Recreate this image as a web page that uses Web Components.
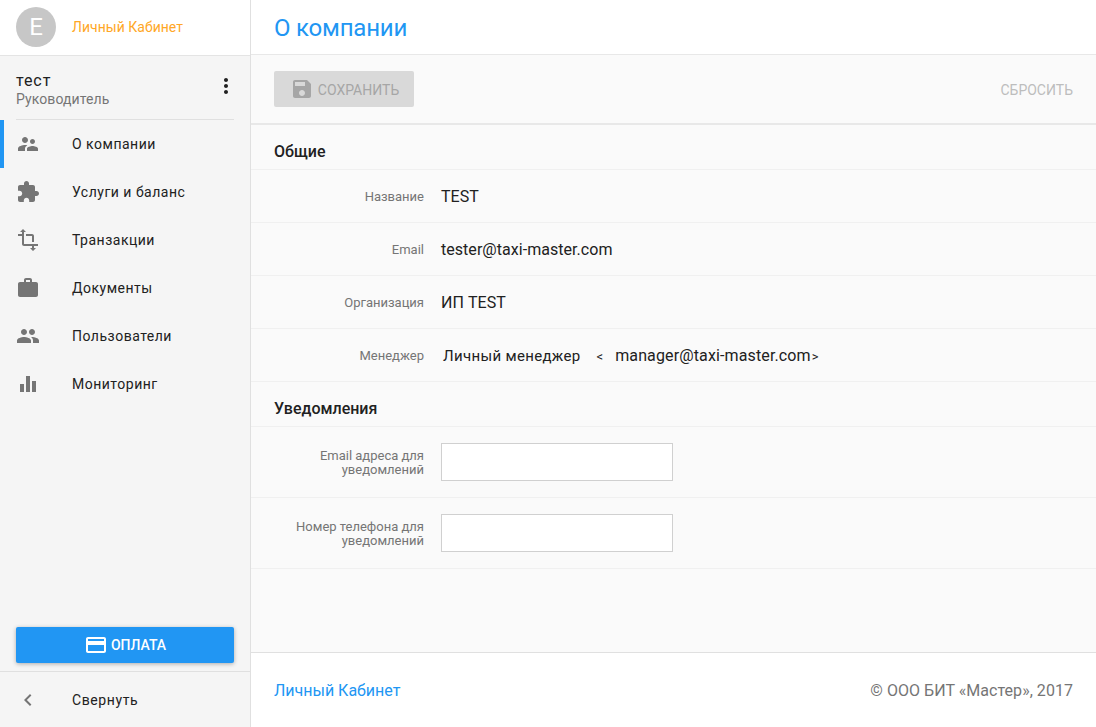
<!DOCTYPE html>
<html lang="ru">
<head>
<meta charset="utf-8">
<title>О компании</title>
<style>
  html, body { margin: 0; height: 100%; }
  body { font-family: Roboto, "Liberation Sans", sans-serif; overflow: hidden; }
</style>
</head>
<body>
<app-shell>
  <app-sidebar slot="sidebar">
    <nav-item active label="О компании" icon="M16.5 12c1.38 0 2.49-1.12 2.49-2.5S17.88 7 16.5 7C15.12 7 14 8.12 14 9.5s1.12 2.5 2.5 2.5zM9 11c1.66 0 2.99-1.34 2.99-3S10.66 5 9 5C7.34 5 6 6.34 6 8s1.34 3 3 3zm7.5 3c-1.83 0-5.5.92-5.5 2.75V19h11v-2.25c0-1.83-3.67-2.75-5.5-2.75zM9 13c-2.33 0-7 1.17-7 3.5V19h7v-2.25c0-.85.33-2.34 2.37-3.47C10.5 13.1 9.66 13 9 13z"></nav-item>
    <nav-item label="Услуги и баланс" icon="M20.5 11H19V7c0-1.1-.9-2-2-2h-4V3.5C13 2.12 11.88 1 10.5 1S8 2.12 8 3.5V5H4c-1.1 0-1.99.9-1.99 2v3.8H3.5c1.49 0 2.7 1.21 2.7 2.7s-1.21 2.7-2.7 2.7H2V20c0 1.1.9 2 2 2h3.8v-1.5c0-1.49 1.21-2.7 2.7-2.7 1.49 0 2.7 1.21 2.7 2.7V22H17c1.1 0 2-.9 2-2v-4h1.5c1.38 0 2.5-1.12 2.5-2.5S21.88 11 20.5 11z"></nav-item>
    <nav-item label="Транзакции" icon="M22 18v-2H8V4h2L7 1 4 4h2v2H2v2h4v8c0 1.1.9 2 2 2h8v2h-2l3 3 3-3h-2v-2h4zM10 8h6v6h2V8c0-1.1-.9-2-2-2h-6v2z"></nav-item>
    <nav-item label="Документы" icon="M20 6h-4V4c0-1.11-.89-2-2-2h-4c-1.11 0-2 .89-2 2v2H4c-1.11 0-1.99.89-1.99 2L2 19c0 1.11.89 2 2 2h16c1.11 0 2-.89 2-2V8c0-1.11-.89-2-2-2zm-6 0h-4V4h4v2z"></nav-item>
    <nav-item label="Пользователи" icon="M16 11c1.66 0 2.99-1.34 2.99-3S17.66 5 16 5c-1.66 0-3 1.34-3 3s1.34 3 3 3zm-8 0c1.66 0 2.99-1.34 2.99-3S9.66 5 8 5C6.34 5 5 6.34 5 8s1.34 3 3 3zm0 2c-2.33 0-7 1.17-7 3.5V19h14v-2.5c0-2.33-4.67-3.5-7-3.5zm8 0c-.29 0-.62.02-.97.05 1.16.84 1.97 1.97 1.97 3.45V19h6v-2.5c0-2.33-4.67-3.5-7-3.5z"></nav-item>
    <nav-item label="Мониторинг" icon="M10 20h4V4h-4v16zm-6 0h4v-8H4v8zM16 9v11h4V9h-4z"></nav-item>
  </app-sidebar>
  <company-page slot="main">
    <section-head>Общие</section-head>
    <form-row label="Название">TEST</form-row>
    <form-row label="Email">tester@taxi-master.com</form-row>
    <form-row label="Организация">ИП TEST</form-row>
    <manager-row label="Менеджер"></manager-row>
    <section-head>Уведомления</section-head>
    <input-row>Email адреса для<br>уведомлений</input-row>
    <input-row>Номер телефона для<br>уведомлений</input-row>
  </company-page>
</app-shell>

<script>
const shellTpl = document.createElement("template");
shellTpl.innerHTML = `
  <style>
    :host { display: flex; width: 100%; height: 727px; }
    ::slotted([slot=sidebar]) { flex: 0 0 251px; }
    ::slotted([slot=main]) { flex: 1 1 auto; min-width: 0; }
  </style>
  <slot name="sidebar"></slot>
  <slot name="main"></slot>
`;
customElements.define("app-shell", class AppShell extends HTMLElement {
  constructor() {
    super();
    this.attachShadow({ mode: "open" });
    this.shadowRoot.appendChild(shellTpl.content.cloneNode(true));
  }
});

const sidebarTpl = document.createElement("template");
sidebarTpl.innerHTML = `
  <style>
    :host {
      display: flex;
      flex-direction: column;
      box-sizing: border-box;
      height: 727px;
      background: #f5f5f5;
      border-right: 1px solid #e0e0e0;
      color: #212121;
    }
    #brand {
      display: flex;
      align-items: center;
      height: 54px;
      padding: 0 0 1px 16px;
      background: #fff;
      border-bottom: 1px solid #e4e4e4;
    }
    #avatar {
      width: 40px;
      height: 40px;
      border-radius: 50%;
      background: #c7c7c7;
      color: #fff;
      font-size: 24px;
      line-height: 40px;
      text-align: center;
      margin-right: 16px;
    }
    #brand-name { color: #ffa726; font-size: 14px; letter-spacing: .03px; }
    #user {
      display: flex;
      align-items: center;
      justify-content: space-between;
      margin: 0 16px;
      height: 63px;
      border-bottom: 1px solid #e0e0e0;
    }
    #who { padding-top: 4px; }
    #user-name { font-size: 16px; line-height: 19px; letter-spacing: .9px; }
    #user-role { font-size: 14px; line-height: 18px; color: #757575; letter-spacing: .1px; }
    #more { width: 24px; height: 24px; margin: -3px -4px 0 0; fill: #212121; }
    #nav { flex: 1 1 auto; }
    #pay {
      display: flex;
      align-items: center;
      justify-content: center;
      height: 36px;
      margin: 0 16px 8px;
      background: #2196f3;
      color: #fff;
      border-radius: 2px;
      font-size: 14px;
      font-weight: 500;
      box-shadow: 0 1px 4px rgba(0,0,0,.3);
    }
    #pay svg { width: 24px; height: 24px; fill: #fff; margin-right: 3px; }
    #collapse {
      display: flex;
      align-items: center;
      height: 55px;
      border-top: 1px solid #e0e0e0;
      font-size: 14px;
      letter-spacing: .6px;
    }
    #collapse svg { width: 24px; height: 24px; fill: #757575; margin: 0 32px 0 16px; }
  </style>
  <div id="brand"><div id="avatar">E</div><div id="brand-name">Личный Кабинет</div></div>
  <div id="user">
    <div id="who"><div id="user-name">тест</div><div id="user-role">Руководитель</div></div>
    <svg id="more" viewBox="0 0 24 24"><path d="M12 8c1.1 0 2-.9 2-2s-.9-2-2-2-2 .9-2 2 .9 2 2 2zm0 2c-1.1 0-2 .9-2 2s.9 2 2 2 2-.9 2-2-.9-2-2-2zm0 6c-1.1 0-2 .9-2 2s.9 2 2 2 2-.9 2-2-.9-2-2-2z"/></svg>
  </div>
  <div id="nav"><slot></slot></div>
  <div id="pay">
    <svg viewBox="0 0 24 24"><path d="M20 4H4c-1.11 0-1.99.89-1.99 2L2 18c0 1.11.89 2 2 2h16c1.11 0 2-.89 2-2V6c0-1.11-.89-2-2-2zm0 14H4v-6h16v6zm0-10H4V6h16v2z"/></svg>
    ОПЛАТА
  </div>
  <div id="collapse">
    <svg viewBox="0 0 24 24"><path d="M15.41 7.41L14 6l-6 6 6 6 1.41-1.41L10.83 12z"/></svg>
    Свернуть
  </div>
`;
customElements.define("app-sidebar", class AppSidebar extends HTMLElement {
  constructor() {
    super();
    this.attachShadow({ mode: "open" });
    this.shadowRoot.appendChild(sidebarTpl.content.cloneNode(true));
  }
});

const navTpl = document.createElement("template");
navTpl.innerHTML = `
  <style>
    :host {
      display: flex;
      align-items: center;
      height: 48px;
      box-sizing: border-box;
      padding-left: 16px;
      font-size: 14px;
      letter-spacing: .5px;
      color: #212121;
    }
    :host([active]) { box-shadow: inset 4px 0 0 #2196f3; }
    svg { width: 24px; height: 24px; fill: #757575; margin-right: 32px; flex: none; }
  </style>
  <svg viewBox="0 0 24 24"><path></path></svg>
  <span id="label"></span>
`;
customElements.define("nav-item", class NavItem extends HTMLElement {
  constructor() {
    super();
    this.attachShadow({ mode: "open" });
    this.shadowRoot.appendChild(navTpl.content.cloneNode(true));
  }
  connectedCallback() {
    this.shadowRoot.querySelector("path").setAttribute("d", this.getAttribute("icon"));
    this.shadowRoot.querySelector("#label").textContent = this.getAttribute("label");
  }
});

const pageTpl = document.createElement("template");
pageTpl.innerHTML = `
  <style>
    :host {
      display: flex;
      flex-direction: column;
      height: 727px;
      background: #fafafa;
      color: #212121;
    }
    #title {
      height: 53px;
      padding: 1px 0 0 23px;
      flex: none;
      display: flex;
      align-items: center;
      background: #fff;
      border-bottom: 1px solid #e8e8e8;
      color: #2196f3;
      font-size: 24px;
      letter-spacing: -.2px;
    }
    #toolbar {
      flex: none;
      height: 68px;
      display: flex;
      align-items: center;
      justify-content: space-between;
      padding: 0 23px;
      border-bottom: 2px solid #e8e8e8;
    }
    #save {
      display: flex;
      align-items: center;
      justify-content: center;
      box-sizing: border-box;
      width: 140px;
      height: 36px;
      padding: 1px 0 0 1px;
      background: #d9d9d9;
      border-radius: 2px;
      color: #a6a6a6;
      font-size: 14px;
    }
    #save svg { width: 24px; height: 24px; fill: #a6a6a6; margin: -1px 4px 0 0; }
    #reset { color: #bdbdbd; font-size: 14px; padding-top: 1px; }
    #content { flex: 1 1 auto; }
    #footer {
      flex: none;
      height: 74px;
      display: flex;
      align-items: center;
      justify-content: space-between;
      padding: 0 23px;
      background: #fff;
      border-top: 1px solid #e0e0e0;
      font-size: 16px;
    }
    #footer-link { color: #2196f3; }
    #copy { color: #757575; letter-spacing: .04px; }
  </style>
  <div id="title">О компании</div>
  <div id="toolbar">
    <div id="save">
      <svg viewBox="0 0 24 24"><path d="M17 3H5c-1.11 0-2 .9-2 2v14c0 1.1.89 2 2 2h14c1.1 0 2-.9 2-2V7l-4-4zm-5 16c-1.66 0-3-1.34-3-3s1.34-3 3-3 3 1.34 3 3-1.34 3-3 3zm3-10H5V5h10v4z"/></svg>
      СОХРАНИТЬ
    </div>
    <div id="reset">СБРОСИТЬ</div>
  </div>
  <div id="content"><slot></slot></div>
  <div id="footer">
    <div id="footer-link">Личный Кабинет</div>
    <div id="copy">© ООО БИТ «Мастер», 2017</div>
  </div>
`;
customElements.define("company-page", class CompanyPage extends HTMLElement {
  constructor() {
    super();
    this.attachShadow({ mode: "open" });
    this.shadowRoot.appendChild(pageTpl.content.cloneNode(true));
  }
});

const headTpl = document.createElement("template");
headTpl.innerHTML = `
  <style>
    :host {
      display: flex;
      align-items: center;
      box-sizing: border-box;
      height: 45px;
      padding: 8px 0 0 23px;
      border-bottom: 1px solid #f0f0f0;
      font-size: 16px;
      font-weight: 500;
      color: #212121;
    }
  </style>
  <slot></slot>
`;
customElements.define("section-head", class SectionHead extends HTMLElement {
  constructor() {
    super();
    this.attachShadow({ mode: "open" });
    this.shadowRoot.appendChild(headTpl.content.cloneNode(true));
  }
});

const rowStyles = `
  :host {
    display: grid;
    grid-template-columns: 150px 1fr;
    column-gap: 17px;
    align-items: center;
    box-sizing: content-box;
    padding-left: 23px;
    border-bottom: 1px solid #f0f0f0;
  }
  #label {
    text-align: right;
    color: #757575;
    font-size: 13px;
    line-height: 14px;
    padding-top: 2px;
  }
`;

const rowTpl = document.createElement("template");
rowTpl.innerHTML = `
  <style>
    ${rowStyles}
    :host { height: 52px; }
    #value { font-size: 16px; letter-spacing: .04px; color: #212121; }
  </style>
  <div id="label"></div>
  <div id="value"><slot></slot></div>
`;
customElements.define("form-row", class FormRow extends HTMLElement {
  constructor() {
    super();
    this.attachShadow({ mode: "open" });
    this.shadowRoot.appendChild(rowTpl.content.cloneNode(true));
  }
  connectedCallback() {
    this.shadowRoot.querySelector("#label").textContent = this.getAttribute("label");
  }
});

const managerTpl = document.createElement("template");
managerTpl.innerHTML = `
  <style>
    ${rowStyles}
    :host { height: 52px; }
    #value {
      display: flex;
      align-items: baseline;
      padding: 1px 0 0 2px;
      font-size: 15px;
      letter-spacing: .33px;
      color: #212121;
      white-space: pre;
    }
    .angle { font-size: 13px; letter-spacing: 0; }
    #lt { margin: 0 12px 0 16px; }
    #mail { font-size: 16px; letter-spacing: .13px; }
    #gt { margin-left: 1px; }
  </style>
  <div id="label"></div>
  <div id="value"><span>Личный менеджер</span><span id="lt" class="angle">&lt;</span><span id="mail">manager@taxi-master.com</span><span id="gt" class="angle">&gt;</span></div>
`;
customElements.define("manager-row", class ManagerRow extends HTMLElement {
  constructor() {
    super();
    this.attachShadow({ mode: "open" });
    this.shadowRoot.appendChild(managerTpl.content.cloneNode(true));
  }
  connectedCallback() {
    this.shadowRoot.querySelector("#label").textContent = this.getAttribute("label");
  }
});

const inputTpl = document.createElement("template");
inputTpl.innerHTML = `
  <style>
    ${rowStyles}
    :host { height: 70px; }
    input {
      display: block;
      box-sizing: border-box;
      width: 232px;
      height: 38px;
      border: 1px solid #d0d0d0;
      background: #fff;
      border-radius: 0;
      outline: none;
    }
  </style>
  <div id="label"><slot></slot></div>
  <div><input type="text"></div>
`;
customElements.define("input-row", class InputRow extends HTMLElement {
  constructor() {
    super();
    this.attachShadow({ mode: "open" });
    this.shadowRoot.appendChild(inputTpl.content.cloneNode(true));
  }
});
</script>
</body>
</html>
